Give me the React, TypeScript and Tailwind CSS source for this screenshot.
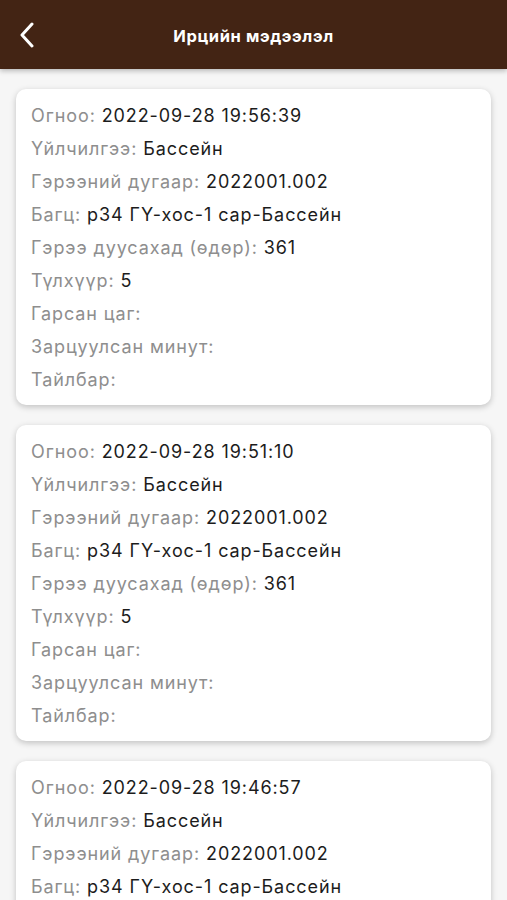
const entries = [
  { date: '2022-09-28 19:56:39' },
  { date: '2022-09-28 19:51:10' },
  { date: '2022-09-28 19:46:57' },
];

function Row({ label, value }: { label: string; value?: string }) {
  return (
    <p className="h-[33px] leading-[33px] whitespace-nowrap">
      <span className="text-[#8e8e8e]">{label}: </span>
      {value && <span className="text-[#1c1c1c]">{value}</span>}
    </p>
  );
}

function VisitCard({ date }: { date: string }) {
  return (
    <div className="bg-white rounded-[10px] shadow-[0_2px_6px_rgba(0,0,0,0.22)] px-[15px] pt-[10px] pb-[9px]">
      <Row label="Огноо" value={date} />
      <Row label="Үйлчилгээ" value="Бассейн" />
      <Row label="Гэрээний дугаар" value="2022001.002" />
      <Row label="Багц" value="р34 ГҮ-хос-1 сар-Бассейн" />
      <Row label="Гэрээ дуусахад (өдөр)" value="361" />
      <Row label="Түлхүүр" value="5" />
      <Row label="Гарсан цаг" />
      <Row label="Зарцуулсан минут" />
      <Row label="Тайлбар" />
    </div>
  );
}

export default function App() {
  return (
    <main className="w-[507px] h-[900px] overflow-hidden bg-[#f6f6f6] font-[Inter,sans-serif] text-[18px] tracking-[0.9px]">
      {/* Толгой хэсэг */}
      <header className="relative h-[69px] bg-[#432414] flex items-center justify-center shadow-[0_2px_5px_rgba(0,0,0,0.25)] z-10">
        <svg className="absolute left-[19px] top-[22px]" width="16" height="26" viewBox="0 0 16 26" fill="none">
          <path d="M13 2L3 13l10 11" stroke="white" strokeWidth="3" strokeLinecap="round" strokeLinejoin="round" />
        </svg>
        <h1 className="text-white font-bold text-[16.5px] tracking-[0.6px] pt-[3px]">Ирцийн мэдээлэл</h1>
      </header>

      {/* Ирцийн жагсаалт */}
      <div className="px-[16px] pt-[20px] flex flex-col gap-[20px]">
        {entries.map((e) => (
          <VisitCard key={e.date} date={e.date} />
        ))}
      </div>
    </main>
  );
}
